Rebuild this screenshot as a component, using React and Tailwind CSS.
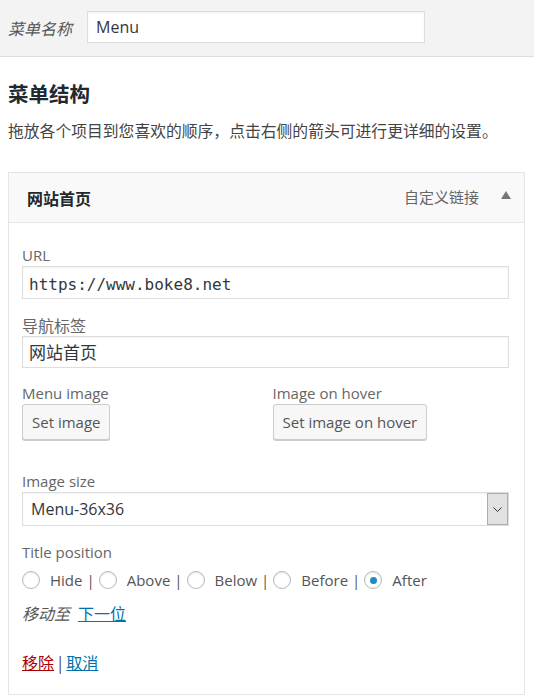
import React from "react";

function Radio({ checked }) {
  return (
    <span className="inline-flex h-[18px] w-[18px] shrink-0 items-center justify-center rounded-full border border-[#b4b9be] bg-white shadow-[inset_0_1px_2px_rgba(0,0,0,0.1)]">
      {checked && <span className="h-[7px] w-[7px] rounded-full bg-[#1e8cbe]" />}
    </span>
  );
}

export default function App() {
  const opts = ["Hide", "Above", "Below", "Before", "After"];
  return (
    <div
      className="w-full bg-white text-[#444]"
      style={{ fontFamily: '"Open Sans", "Noto Sans CJK SC", sans-serif' }}
    >
      {/* top bar */}
      <div className="flex h-[57px] items-center border-b border-[#dddddd] bg-[#f3f3f3] pl-2">
        <span
          className="text-[16px] italic text-[#555]"
          style={{ fontFamily: '"Noto Sans CJK SC", sans-serif' }}
        >
          菜单名称
        </span>
        <div className="ml-[15px] mt-[-3px] flex h-[32px] w-[338px] items-center border border-[#dddddd] bg-white pl-[8px] text-[16px] text-[#32373c] shadow-[inset_0_1px_2px_rgba(0,0,0,0.05)]">
          Menu
        </div>
      </div>

      {/* heading */}
      <div
        className="mt-[22px] px-2 text-[20.5px] font-bold leading-[28px] text-[#23282d]"
        style={{ fontFamily: '"Noto Sans CJK SC", sans-serif' }}
      >
        菜单结构
      </div>
      <div
        className="mt-[12px] whitespace-nowrap px-2 text-[15.8px] leading-[24px] text-[#444]"
        style={{ fontFamily: '"Noto Sans CJK SC", sans-serif' }}
      >
        拖放各个项目到您喜欢的顺序，点击右侧的箭头可进行更详细的设置。
      </div>

      {/* card */}
      <div className="ml-2 mr-[9px] mt-[29px] border border-[#e5e5e5]">
        <div className="flex h-[50px] items-center border-b border-[#e5e5e5] bg-[#f9f9f9] pl-[18px] pr-[13px]">
          <span
            className="text-[16px] font-bold text-[#23282d]"
            style={{ fontFamily: '"Noto Sans CJK SC", sans-serif' }}
          >
            网站首页
          </span>
          <span
            className="ml-auto text-[15px] text-[#666]"
            style={{ fontFamily: '"Noto Sans CJK SC", sans-serif' }}
          >
            自定义链接
          </span>
          <svg width="10" height="8" viewBox="0 0 10 8" className="ml-[22px] mt-[-5px]">
            <polygon points="5,0 10,8 0,8" fill="#777" />
          </svg>
        </div>

        <div className="pb-[21px] pl-[13px] pr-[15px] pt-[21px]">
          <div className="text-[15px] leading-[22px] text-[#666]">URL</div>
          <div
            className="flex h-[33px] items-center border border-[#dddddd] bg-white pl-[6px] pt-[4px] text-[16px] text-[#32373c] shadow-[inset_0_1px_2px_rgba(0,0,0,0.05)]"
            style={{ fontFamily: '"DejaVu Sans Mono", monospace' }}
          >
            https://www.boke8.net
          </div>

          <div
            className="mt-[15px] text-[16px] leading-[22px] text-[#666]"
            style={{ fontFamily: '"Noto Sans CJK SC", sans-serif' }}
          >
            导航标签
          </div>
          <div
            className="flex h-[32px] items-center border border-[#dddddd] bg-white pl-[6px] text-[17px] text-[#32373c] shadow-[inset_0_1px_2px_rgba(0,0,0,0.05)]"
            style={{ fontFamily: '"Noto Sans CJK SC", sans-serif' }}
          >
            网站首页
          </div>

          <div className="mt-[14px] grid grid-cols-2">
            <div>
              <div className="text-[15px] leading-[22px] text-[#666]">Menu image</div>
              <div className="inline-flex h-[36px] items-center rounded-[3px] border border-[#cccccc] bg-[#f7f7f7] px-[9px] text-[15px] text-[#555] shadow-[0_1px_0_#cccccc]">
                Set image
              </div>
            </div>
            <div className="pl-[7px]">
              <div className="text-[15px] leading-[22px] text-[#666]">Image on hover</div>
              <div className="inline-flex h-[36px] items-center rounded-[3px] border border-[#cccccc] bg-[#f7f7f7] px-[9px] text-[15px] text-[#555] shadow-[0_1px_0_#cccccc]">
                Set image on hover
              </div>
            </div>
          </div>

          <div className="mt-[30px] text-[15px] leading-[22px] text-[#666]">Image size</div>
          <div className="flex h-[34px] items-stretch border border-[#dddddd] bg-white shadow-[inset_0_1px_2px_rgba(0,0,0,0.05)]">
            <span className="flex flex-1 items-center pl-[8px] text-[16px] text-[#32373c]">Menu-36x36</span>
            <span className="flex w-[21px] items-center justify-center border border-[#adadad] bg-[#e1e1e1]">
              <svg width="9" height="5" viewBox="0 0 9 5">
                <polyline points="0.5,0.5 4.5,4.5 8.5,0.5" fill="none" stroke="#333" strokeWidth="1" />
              </svg>
            </span>
          </div>

          <div className="mt-[15px] text-[15px] leading-[22px] text-[#666]">Title position</div>
          <div className="mt-[6px] flex h-[22px] items-center text-[15px] text-[#555]">
            {opts.map((o, i) => (
              <React.Fragment key={o}>
                <span className={i === 0 ? "flex items-center" : "ml-[4px] flex items-center"}>
                  <Radio checked={o === "After"} />
                  <span className="ml-[10px]">{o}</span>
                </span>
                {i < opts.length - 1 && <span className="ml-[4px] text-[#555]">|</span>}
              </React.Fragment>
            ))}
          </div>

          <div
            className="mt-[11px] flex h-[22px] items-center text-[16px]"
            style={{ fontFamily: '"Noto Sans CJK SC", sans-serif' }}
          >
            <span className="italic text-[#555]">移动至</span>
            <span className="ml-[8px] text-[#0073aa] underline">下一位</span>
          </div>

          <div
            className="mt-[27px] flex h-[22px] items-center text-[16px]"
            style={{ fontFamily: '"Noto Sans CJK SC", sans-serif' }}
          >
            <span className="text-[#aa0000] underline">移除</span>
            <span className="mx-[4px] text-[#444]">|</span>
            <span className="text-[#0073aa] underline">取消</span>
          </div>
        </div>
      </div>
    </div>
  );
}
